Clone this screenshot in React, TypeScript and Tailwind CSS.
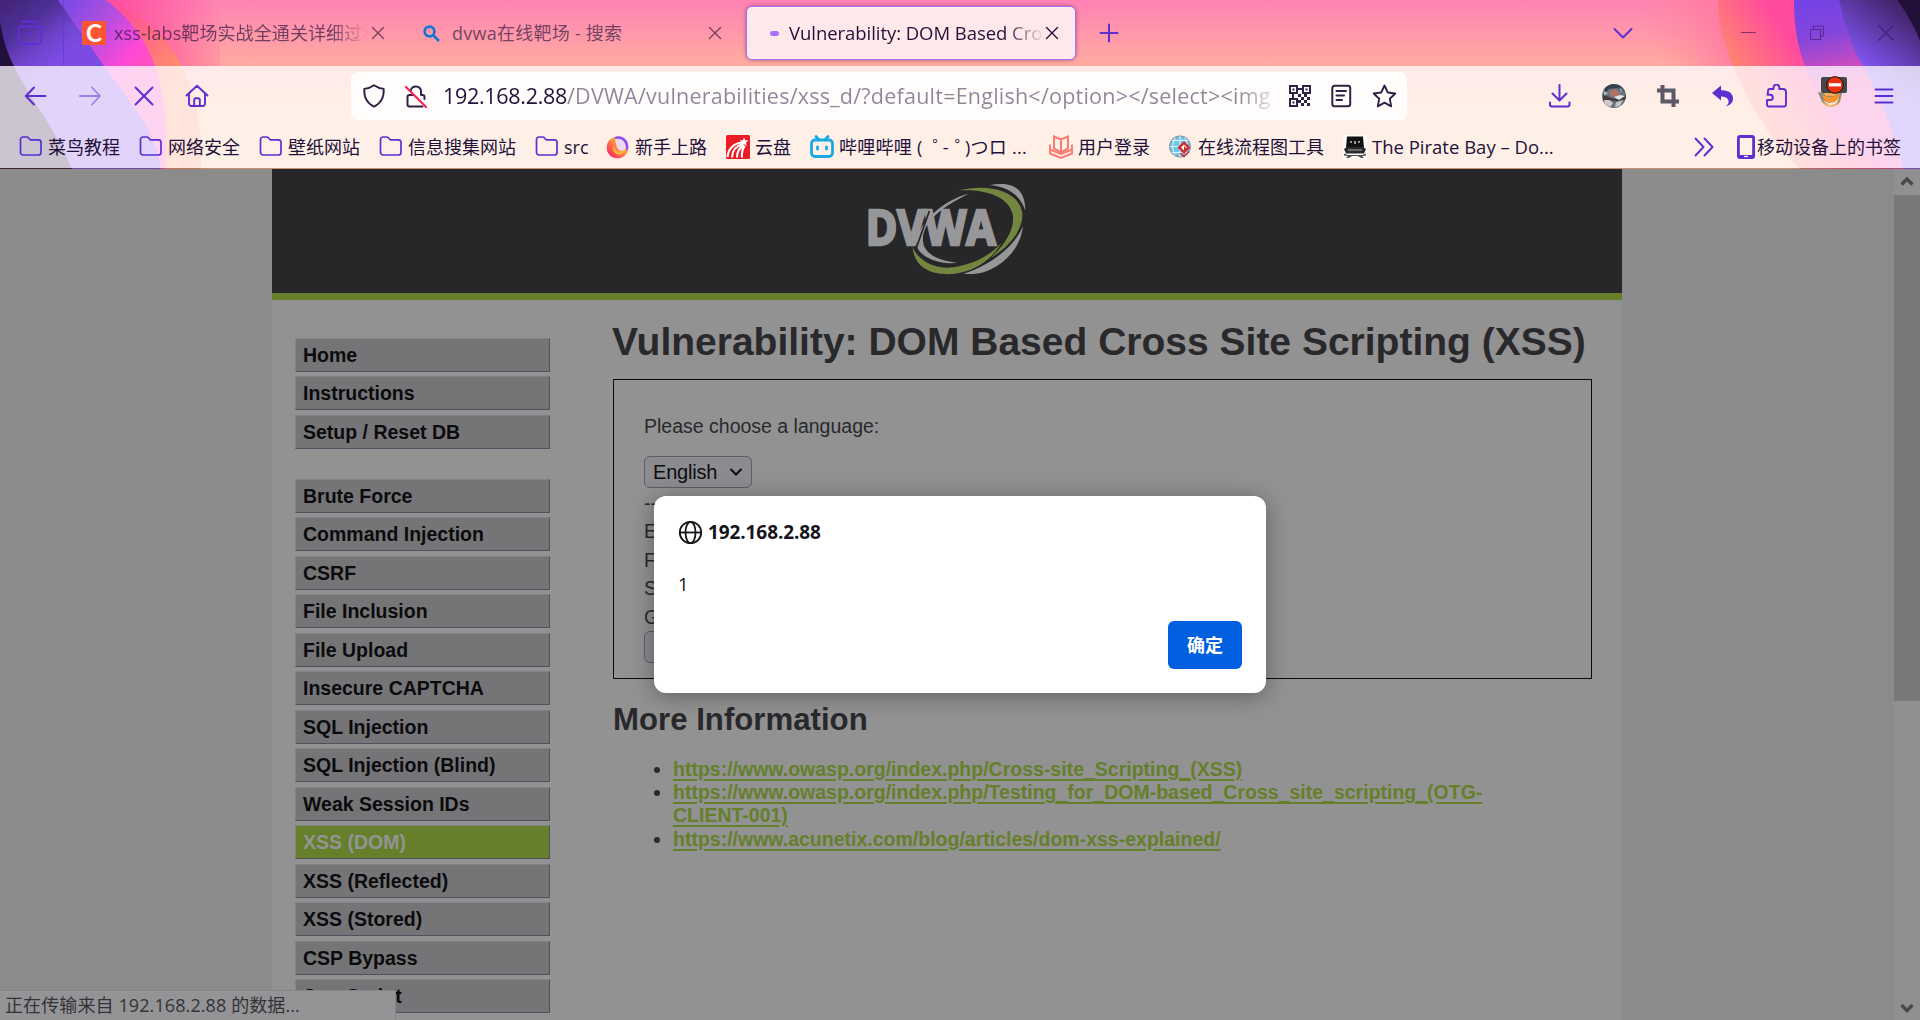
import React from "react";

const UI = "font-['Open_Sans','Noto_Sans_CJK_SC',sans-serif]";
const PURPLE = "#5b2fd0";

type IconProps = { className?: string; children: React.ReactNode; box?: number; color?: string; sw?: number };

function Icon({ className = "", children, box = 24, color = PURPLE, sw = 1.8 }: IconProps) {
  return (
    <svg
      className={`shrink-0 ${className}`}
      width={box}
      height={box}
      viewBox={`0 0 ${box} ${box}`}
      fill="none"
      stroke={color}
      strokeWidth={sw}
      strokeLinecap="round"
      strokeLinejoin="round"
    >
      {children}
    </svg>
  );
}

/* Curved gradient artwork behind the toolbars */
function ThemeArt() {
  return (
    <svg className="absolute inset-0" width="1920" height="169" viewBox="0 0 1920 169">
      <defs>
        <linearGradient id="base" x1="0" y1="0" x2="0" y2="1">
          <stop offset="0" stopColor="#ff82b4" />
          <stop offset="0.39" stopColor="#ffaca0" />
          <stop offset="0.7" stopColor="#ffc896" />
          <stop offset="1" stopColor="#ffc896" />
        </linearGradient>
        <linearGradient id="hot" gradientUnits="userSpaceOnUse" x1="120" y1="20" x2="215" y2="-10">
          <stop offset="0" stopColor="#ff4fa0" />
          <stop offset="1" stopColor="#ff4fa0" stopOpacity="0" />
        </linearGradient>
        <linearGradient id="ora" gradientUnits="userSpaceOnUse" x1="120" y1="10" x2="185" y2="70">
          <stop offset="0" stopColor="#ff4f9e" />
          <stop offset="0.5" stopColor="#ff6f80" />
          <stop offset="1" stopColor="#ff9468" />
        </linearGradient>
        <linearGradient id="mag" gradientUnits="userSpaceOnUse" x1="70" y1="0" x2="145" y2="60">
          <stop offset="0" stopColor="#7d4ae4" />
          <stop offset="0.4" stopColor="#b04ee0" />
          <stop offset="0.85" stopColor="#ff49d6" />
          <stop offset="1" stopColor="#ff4fc0" />
        </linearGradient>
        <linearGradient id="pur" gradientUnits="userSpaceOnUse" x1="0" y1="0" x2="50" y2="66">
          <stop offset="0" stopColor="#402474" />
          <stop offset="0.45" stopColor="#50309a" />
          <stop offset="0.75" stopColor="#7044cc" />
          <stop offset="1" stopColor="#7c4be4" />
        </linearGradient>
        <linearGradient id="rhot" gradientUnits="userSpaceOnUse" x1="1660" y1="60" x2="1725" y2="30">
          <stop offset="0" stopColor="#ff8a9a" stopOpacity="0" />
          <stop offset="1" stopColor="#ff7ca4" />
        </linearGradient>
        <linearGradient id="rora" gradientUnits="userSpaceOnUse" x1="1722" y1="50" x2="1775" y2="15">
          <stop offset="0" stopColor="#ff8470" />
          <stop offset="1" stopColor="#ff4a9e" />
        </linearGradient>
        <linearGradient id="rpur" gradientUnits="userSpaceOnUse" x1="1810" y1="0" x2="1830" y2="90">
          <stop offset="0" stopColor="#7542e6" />
          <stop offset="0.4" stopColor="#8446dc" />
          <stop offset="1" stopColor="#f04eb0" />
        </linearGradient>
        <linearGradient id="rdeep" gradientUnits="userSpaceOnUse" x1="1858" y1="64" x2="1900" y2="10">
          <stop offset="0" stopColor="#8256f6" />
          <stop offset="1" stopColor="#442670" />
        </linearGradient>
      </defs>
      <rect width="1920" height="169" fill="url(#base)" />
      <path d="M100 0H220V66H160Z" fill="url(#hot)" />
      <path d="M106 0C140 10 165 35 182 66C196 95 204 130 201 169H0V0Z" fill="url(#ora)" />
      <path d="M106 0C135 22 152 50 160 82C166 110 168 140 165 169H0V0Z" fill="url(#mag)" />
      <path d="M58 0L104 66C125 95 145 120 153 140C157 150 160 160 160 169H0V0Z" fill="url(#pur)" />
      <path d="M0 22C3 40 8 55 14 66C30 100 54 125 72 169H0Z" fill="#22103a" />
      <rect x="63" y="0" width="1" height="66" fill="#5b2fd0" opacity="0.5" />
      <path d="M1640 0H1760V66H1640Z" fill="url(#rhot)" />
      <path d="M1718 0C1718 25 1725 46 1733 66C1752 112 1775 145 1800 169H1920V0Z" fill="url(#rora)" />
      <path d="M1794 0C1794 25 1797 45 1805 66C1820 110 1850 145 1880 169H1920V0Z" fill="url(#rpur)" />
      <path d="M1839 0C1845 26 1852 48 1863 66C1885 105 1894 135 1903 169H1920V0Z" fill="url(#rdeep)" />
      <path d="M1897 0C1906 12 1914 25 1920 41V0Z" fill="#22103a" />
      <rect y="66" width="1920" height="102" fill="#fffdff" fillOpacity="0.77" />
      <rect y="168" width="1920" height="1" fill="#6a4030" fillOpacity="0.4" />
    </svg>
  );
}

function Cross({ color, className = "" }: { color: string; className?: string }) {
  return (
    <Icon box={14} color={color} sw={1.4} className={className}>
      <path d="M1.5 1.5l11 11M12.5 1.5l-11 11" />
    </Icon>
  );
}

function TabStrip() {
  return (
    <div className="flex h-[66px] items-center text-[18px] leading-[54px] whitespace-nowrap">
      <Icon box={26} className="ml-[17px]" sw={1.8} color="#5e30d6">
        <path d="M5 1.5h16M2 9v12.5a2.5 2.5 0 0 0 2.500 2.500h17a2.500 2.500 0 0 0 2.500-2.500V9a2.500 2.500 0 0 0-2.500-2.500h-17A2.500 2.500 0 0 0 2 9ZM10.500 13.500h5" />
      </Icon>
      <div className="ml-[39px] flex h-6 w-6 shrink-0 items-center justify-center bg-[#fc5531] font-['Lato'] text-[24px] leading-6 font-bold text-white">
        C
      </div>
      <div className="ml-[8px] w-[255px] overflow-hidden tracking-[0.1px] text-[#22103a]/65 [mask-image:linear-gradient(to_right,black_218px,transparent_254px)]">
        xss-labs靶场实战全通关详细过程
      </div>
      <Cross color="#7a3d63" className="ml-[2px]" />
      <svg className="ml-[38px] shrink-0" width="17" height="17" viewBox="0 0 17 17" fill="none" stroke="#1277d3" strokeWidth="2.600">
        <circle cx="6.500" cy="6.500" r="4.900" />
        <path d="M10 10l6 6" />
      </svg>
      <div className="ml-[12px] w-[256px] tracking-[0.25px] text-[#22103a]/65">dvwa在线靶场 - 搜索</div>
      <Cross color="#7a3d63" />
      <div className="ml-[24px] flex h-[54px] w-[330px] shrink-0 items-center rounded-[6px] border border-[#a56cf5] bg-[#ffe8ea] shadow-[0_0_4px_rgba(60,10,60,0.45)] outline-1 -outline-offset-2 outline-white/40">
        <div className="ml-[23px] h-[5px] w-[9px] rounded-full bg-[#ac70ff]" />
        <div className="ml-[10px] w-[254px] overflow-hidden text-[18.500px] tracking-[-0.05px] text-[#22103a] [mask-image:linear-gradient(to_right,black_215px,transparent_256px)]">
          Vulnerability: DOM Based Cross
        </div>
        <Cross color="#22103a" className="ml-[2px]" />
      </div>
      <Icon box={20} className="ml-[23px]" sw={2}>
        <path d="M10 1.500v17M1.500 10h17" />
      </Icon>
      <Icon box={20} className="ml-[494px]" sw={2}>
        <path d="M1.500 6l8.500 8.500L18.500 6" />
      </Icon>
      <svg className="ml-[108px] shrink-0" width="16" height="16" fill="none" stroke="#8a2f68" strokeWidth="1">
        <path d="M0 7.500h15" />
      </svg>
      <svg className="ml-[53px] shrink-0" width="16" height="16" fill="none" stroke="#5a2a9c" strokeWidth="1.200">
        <path d="M.500 4.500h10v10h-10zM3.500 4V1h10v10h-3" />
      </svg>
      <svg className="ml-[52px] shrink-0" width="16" height="16" fill="none" stroke="#3f2378" strokeWidth="1.100">
        <path d="M.500.500l15 15M15.500.500l-15 15" />
      </svg>
    </div>
  );
}

function NavBar() {
  return (
    <div className="flex h-[60px] items-center">
      <Icon className="ml-[23px]" sw={2}>
        <path d="M22.500 12H3M11 3.500L2.800 12l8.200 8.500" />
      </Icon>
      <Icon className="ml-[31px] opacity-50" sw={1.800}>
        <path d="M2 12h20M14 3.500l8 8.500-8 8.500" />
      </Icon>
      <Icon className="ml-[30px]" sw={2}>
        <path d="M3.500 3.500l17 17M20.500 3.500l-17 17" />
      </Icon>
      <Icon className="ml-[29px]" sw={1.900}>
        <path d="M1.500 11.500L12 1.800l10.500 9.700M4 9.500v10.300A2.300 2.300 0 0 0 6.300 22h11.400a2.300 2.300 0 0 0 2.300-2.200V9.500M9.200 22v-6.200a1.500 1.500 0 0 1 1.500-1.500h2.600a1.500 1.500 0 0 1 1.500 1.500V22" />
      </Icon>
      <div className="ml-[142px] flex h-12 w-[1056px] shrink-0 items-center rounded-[7px] bg-[#fffdfb]">
        <Icon className="ml-[11px]" color="#2f2246" sw={1.900}>
          <path d="M12 1.300c3 2.200 6 3.200 9.700 3.600.4 7.600-1.700 14-9.700 17.800C4 18.900 1.900 12.500 2.300 4.900 6 4.500 9 3.500 12 1.300z" />
        </Icon>
        <Icon className="ml-[18px]" color="#2f2246" sw={2}>
          <path d="M6.800 6.500A5.200 5.200 0 0 1 17 7v4h1.500a2 2 0 0 1 2 2v2M10 11H5.500a2 2 0 0 0-2 2v7.500a2 2 0 0 0 2 2h13" />
          <path d="M2 3l20 20" stroke="#fb1e55" strokeWidth="2.200" />
        </Icon>
        <div className="ml-[15px] w-[833px] overflow-hidden text-[21.5px] leading-[44px] whitespace-nowrap text-[#22103a]/50 [mask-image:linear-gradient(to_right,black_795px,transparent_840px)]">
          <span className="tracking-[-0.3px] text-[#22103a]">192.168.2.88</span>
          <span className="tracking-[0.23px]">{"/DVWA/vulnerabilities/xss_d/?default=English</option></select><img"}</span>
        </div>
        <svg className="ml-[13px] shrink-0" width="22" height="22" viewBox="0 0 22 22" fill="#2f2246">
          <path fillRule="evenodd" d="M0 0h9v9H0zM2 2v5h5V2zM13 0h9v9h-9zM15 2v5h5V2zM0 13h9v9H0zM2 15v5h5v-5z" />
          <path d="M3.500 3.500h2v2h-2zM16.500 3.500h2v2h-2zM3.500 16.500h2v2h-2zM9 3h4v2H9zM3 9h2v4H3zM9 9h3v3H9zM12 12h3v3h-3zM15 9h3v3h-3zM18 12h3v3h-3zM9 15h3v3H9zM15 15h3v3h-3zM12 18h3v3h-3zM18 18h3v3h-3z" />
        </svg>
        <Icon className="ml-[19px]" color="#2f2246" sw={2}>
          <path d="M4.500 1.800h13.500a2.200 2.200 0 0 1 2.200 2.200v16a2.200 2.200 0 0 1-2.200 2.200H4.500A2.200 2.200 0 0 1 2.300 20V4a2.200 2.200 0 0 1 2.200-2.200ZM6.500 7h9.500M6.500 11.500h7.500M6.500 16h5.500" />
        </Icon>
        <Icon className="ml-[18px]" box={25} color="#2f2246" sw={1.900}>
          <path d="M12.500 1.500l3.300 7 7.500 1-5.500 5.300 1.400 7.600-6.700-3.700-6.700 3.700 1.400-7.600L1.700 9.500l7.500-1z" />
        </Icon>
      </div>
      <Icon className="ml-[141px]" sw={2}>
        <path d="M11.500 1v15M4.500 9.500l7 7 7-7M2 18.500v2a2 2 0 0 0 2 2h15.500a2 2 0 0 0 2-2v-2" />
      </Icon>
      <svg className="ml-[30px] shrink-0" width="24" height="24" viewBox="0 0 24 24">
        <clipPath id="face">
          <circle cx="12" cy="12" r="12" />
        </clipPath>
        <g clipPath="url(#face)">
          <rect width="24" height="24" fill="#66757c" />
          <path d="M3 0h15l5 8-8-4-8 1-5 5z" fill="#31424e" />
          <path d="M7 7l6-2 5 4-2 5-7-2z" fill="#b07464" />
          <path d="M1 10l8 4 6 1 9-4v4l-8 3-8-2-7 1z" fill="#4a3a3e" />
          <path d="M12 13l6-2 5 1-6 4z" fill="#dde4e2" />
          <path d="M2 16l5 0 4 3-3 4-5-3z" fill="#d7c9c8" />
          <path d="M14 18l7-2-3 6-5 1z" fill="#b9c6ca" />
          <path d="M2 7l4 2-4 3z" fill="#a6b8bd" />
          <path d="M17 3l4 3-2 3z" fill="#8798a0" />
        </g>
      </svg>
      <svg className="ml-[31px] shrink-0" width="22" height="22" fill="none" stroke="#5b5966" strokeWidth="4">
        <path d="M5.500 0v16.500H22M0 5.500h16.500V22" />
      </svg>
      <svg className="ml-[33px] shrink-0" width="22" height="22" viewBox="0 0 22 22" fill={PURPLE}>
        <path d="M0 8L9 .500v4.800C17 5 21.500 9 21 14.500c-.4 3.700-3.500 6.200-7.500 6.800 2.500-1.500 3.600-3.500 3-5.600C15.800 12.800 13 11.500 9 11.500V15.500z" />
      </svg>
      <Icon className="ml-[31px]" sw={1.900}>
        <path d="M3 8.500V7a2 2 0 0 1 2-2h3.500V3.500a2.900 2.900 0 0 1 5.800 0V5H18a3 3 0 0 1 3 3v12.500a2 2 0 0 1-2 2H4a2 2 0 0 1-2-2V16h3.200a2.600 2.600 0 0 0 0-5.200H2.500z" />
      </Icon>
      <svg className="ml-[29px] mb-[8px] shrink-0" width="30" height="32" viewBox="0 0 30 32">
        <circle cx="13" cy="20.500" r="10.500" fill="#f0ad52" />
        <path d="M0 16l5 1 3 3h9l5-4 2 1-3 10-9 2-8-3z" fill="#8c8a80" />
        <path d="M4 19l6 2 8-1 4-3-2 8-7 2-6-2z" fill="#fb922c" />
        <path d="M4 24l7 3 6-1 4-4-2 5-7 3z" fill="#f4e6cc" />
        <rect x="3" y="1" width="26" height="16" rx="2" fill="#46464a" />
        <circle cx="17" cy="9" r="8.300" fill="#e9330f" stroke="#111" strokeWidth="1" />
        <rect x="11" y="7.200" width="12" height="3.200" fill="white" />
      </svg>
      <Icon className="ml-[24px]" sw={1.900}>
        <path d="M3.500 5.500h17M3.500 12h17M3.500 18.500h17" />
      </Icon>
    </div>
  );
}

function Folder() {
  return (
    <Icon box={24} sw={1.700}>
      <path d="M1.500 4.500a2.500 2.500 0 0 1 2.500-2.500h3.700c.7 0 1.300.3 1.700.8l1.800 2h8.300a2.500 2.500 0 0 1 2.500 2.500v10.200a2.500 2.500 0 0 1-2.500 2.500H4a2.500 2.500 0 0 1-2.500-2.500z" />
    </Icon>
  );
}

function BookIcon({ kind }: { kind: string }) {
  switch (kind) {
    case "fox":
      return (
        <svg className="shrink-0" width="24" height="24" viewBox="0 0 24 24">
          <defs>
            <linearGradient id="fx" x1="1" y1="0.100" x2="0.200" y2="0.900">
              <stop offset="0" stopColor="#ffe14a" />
              <stop offset="0.450" stopColor="#ff9a3a" />
              <stop offset="1" stopColor="#ff2f63" />
            </linearGradient>
          </defs>
          <circle cx="11.500" cy="12.500" r="10.800" fill="url(#fx)" />
          <path d="M8 2.500C14-1 22 3 22.300 11c.3 3-1 5-2 5.500C21 10 17 5 12 5z" fill="#8b4cf0" />
          <path d="M9 4.500C15 2 21 7 19.500 14c-3 4-9 1-9-3.500z" fill="#e9d8f0" />
          <path d="M8 9c-1 6 5 10 12 5.500C18 21 7 22 7 13z" fill="#ffb03c" />
        </svg>
      );
    case "cloud":
      return (
        <svg className="shrink-0" width="24" height="24" viewBox="0 0 24 24">
          <rect width="24" height="24" rx="1.500" fill="#ed1c24" />
          <path d="M1.500 22C2 14 8 8 16 7.500M6 22.500C6 16 10 11 17 9M11 22.500C11 17 13 13 18 10.500M16 22.500c-.5-5 .5-9 3-11.500" stroke="white" strokeWidth="2.100" fill="none" />
          <path d="M18 2.500l1.300 2.800 3 .2-2.300 2.200.7 3.100-2.700-1.500-2.700 1.500.5-3.300-2-2 3-.3z" fill="white" />
        </svg>
      );
    case "bili":
      return (
        <svg className="shrink-0" width="24" height="24" viewBox="0 0 24 24" fill="none" stroke="#1ba7e2" strokeWidth="2.800" strokeLinecap="round">
          <rect x="1.500" y="5" width="21" height="16.500" rx="3.500" />
          <path d="M6 1.500L9 5M18 1.500L15 5M7.500 12v2M16.500 12v2" />
        </svg>
      );
    case "book":
      return (
        <svg className="shrink-0" width="24" height="24" viewBox="0 0 24 24" fill="none" stroke="#fb7b72" strokeWidth="2">
          <path d="M5 1.500l7 3 7-3v12l-4 2-3 2-3-2-4-2zM12 4.500v12" />
          <path d="M1 9.500v9l11 4.500 11-4.500v-9M1 14.500l11 4.500 11-4.500" strokeWidth="1.900" />
        </svg>
      );
    case "globe":
      return (
        <svg className="shrink-0" width="24" height="24" viewBox="0 0 24 24">
          <circle cx="11" cy="11.500" r="10.300" fill="#6fc4ec" stroke="#839aa6" strokeWidth="1.200" />
          <path d="M11 1v21M1 11.500h20M3 5.500h16M3 17.500h16M6 2.500c-3 6-3 12 0 18M16 2.500c3 6 3 12 0 18" stroke="#e4f6ff" strokeWidth="1" fill="none" />
          <path d="M15 6l6.500 6.500L15 19l-6.500-6.500z" fill="#cf2e2e" />
          <path d="M15 9.500l3 3-3 3-3-3z" fill="#fff" />
          <path d="M15 11l3 3-3 3z" fill="#cf2e2e" />
          <path d="M11 18l4 3.500 5-5" stroke="#cf2e2e" strokeWidth="1.400" fill="none" />
        </svg>
      );
    case "ship":
      return (
        <svg className="shrink-0" width="24" height="24" viewBox="0 0 24 24">
          <rect width="24" height="24" fill="#fffdfb" />
          <path d="M4 1.500h16l1 11.500H3z" fill="#111" />
          <path d="M7 6h2v2H7zM11 6h2v3h-2zM15 6h2v2h-2z" fill="#999" />
          <path d="M1 14l3-2h16l3 2-2 4.500H3z" fill="#2a2a2a" />
          <path d="M5 14.500h14v1H5z" fill="#aaa" />
          <path d="M1 18.500l4 1.500h14l4-1.500v2l-4 .5 2 2h-3l-3-2H9l-3 2H3l2-2-4-.5z" fill="#4c4c4c" />
        </svg>
      );
    default:
      return <Folder />;
  }
}

const bookmarks: { kind: string; label: React.ReactNode; w: string; ls?: string }[] = [
  { kind: "folder", label: "菜鸟教程", w: "w-[120px]" },
  { kind: "folder", label: "网络安全", w: "w-[120px]" },
  { kind: "folder", label: "壁纸网站", w: "w-[120px]" },
  { kind: "folder", label: "信息搜集网站", w: "w-[156px]" },
  { kind: "folder", label: "src", w: "w-[71px]" },
  { kind: "fox", label: "新手上路", w: "w-[120px]" },
  { kind: "cloud", label: "云盘", w: "w-[84px]" },
  {
    kind: "bili",
    label: (
      <>
        哔哩哔哩 (<span className="relative left-[10px]">゜</span>
        <span className="relative left-[2px]">-</span>
        <span className="relative left-[8px]">゜</span>)つロ ...
      </>
    ),
    w: "w-[239px]",
    ls: "tracking-[0.25px]",
  },
  { kind: "book", label: "用户登录", w: "w-[120px]" },
  { kind: "globe", label: "在线流程图工具", w: "w-[174px]" },
  { kind: "ship", label: "The Pirate Bay – Do...", w: "w-[351px]", ls: "text-[18.500px] tracking-[0px]" },
];

function BookmarksBar() {
  return (
    <div className="flex h-[42px] items-center text-[18px] whitespace-nowrap text-[#22103a]">
      <div className="flex items-center pl-[19px]">
        {bookmarks.map((b, i) => (
          <div key={i} className={`flex shrink-0 items-center gap-[5px] ${b.w}`}>
            <BookIcon kind={b.kind} />
            <span className={b.ls ?? ""}>{b.label}</span>
          </div>
        ))}
      </div>
      <Icon box={20} sw={1.900}>
        <path d="M1.500 1.500L9.500 10l-8 8.500M10.500 1.500l8 8.500-8 8.500" />
      </Icon>
      <svg className="ml-[23px] shrink-0" width="18" height="24" viewBox="0 0 18 24">
        <path fillRule="evenodd" d="M3 0h12a3 3 0 0 1 3 3v18a3 3 0 0 1-3 3H3a3 3 0 0 1-3-3V3a3 3 0 0 1 3-3ZM2.800 3v17h12.400V3z" fill={PURPLE} />
        <path d="M7 21.500h4" stroke="#fff" strokeWidth="1.200" />
      </svg>
      <span className="ml-[2px]">移动设备上的书签</span>
    </div>
  );
}

function Logo() {
  return (
    <svg width="158" height="92" viewBox="146 54 474 276">
      <path d="M448 86C380 120 300 170 312 235C318 268 360 288 415 293C350 302 292 268 292 238C288 180 370 105 448 86Z" fill="#97979a" />
      <text
        x="139"
        y="241"
        textLength="390"
        lengthAdjust="spacingAndGlyphs"
        fontFamily="Open Sans"
        fontWeight="700"
        fontSize="144"
        fill="#97979a"
        stroke="#97979a"
        strokeWidth="8"
      >
        DVWA
      </text>
      <path d="M330 138L292 246" stroke="#272729" strokeWidth="5" />
      <path d="M420 76C510 55 600 78 609 145C612 195 570 245 515 278C560 235 588 190 580 148C568 95 500 72 420 76Z" fill="#73863f" />
      <path d="M280 246C286 318 350 330 400 327C470 320 520 280 547 233C505 280 440 306 385 308C335 308 295 282 280 246Z" fill="#73863f" />
      <path d="M512 60C575 50 618 65 618 137C605 100 580 68 512 60Z" fill="#97979a" />
      <path d="M611 183C603 265 525 325 460 327H432C520 298 588 240 611 183Z" fill="#97979a" />
    </svg>
  );
}

const menuTop = ["Home", "Instructions", "Setup / Reset DB"];
const menuMain = [
  "Brute Force",
  "Command Injection",
  "CSRF",
  "File Inclusion",
  "File Upload",
  "Insecure CAPTCHA",
  "SQL Injection",
  "SQL Injection (Blind)",
  "Weak Session IDs",
  "XSS (DOM)",
  "XSS (Reflected)",
  "XSS (Stored)",
  "CSP Bypass",
  "JavaScript",
];

function MenuItem({ label }: { label: string }) {
  const active = label === "XSS (DOM)";
  return (
    <li
      className={`mb-[4.5px] h-[34px] border border-t-[#838385] border-r-[#50505f] border-b-[#50505f] border-l-[#838385] pl-[7px] text-[19.5px] leading-[33px] font-bold ${
        active ? "bg-[#657f2a] text-[#949495]" : "bg-[#757577] text-[#0b0b0d]"
      }`}
    >
      {label}
    </li>
  );
}

function SelectBox({ label }: { label: string }) {
  return (
    <div className="flex h-8 w-[108px] items-center rounded-[6px] border border-[#5d5d68] bg-[#8b8b90] pl-2 text-[20px] text-[#0d0d10]">
      <span className="w-[76px] tracking-[-0.2px]">{label}</span>
      <svg width="14" height="10" fill="none" stroke="#0d0d10" strokeWidth="2" strokeLinecap="round">
        <path d="M2 2.500l5 5 5-5" />
      </svg>
    </div>
  );
}

const linkClass = "font-bold text-[#657f2a] underline decoration-2 underline-offset-[3px]";

function Page() {
  return (
    <div className="flex h-[851px] overflow-hidden bg-[#8b8b8c] font-['Liberation_Sans',sans-serif]">
      <div className="ml-[272px] flex h-full w-[1350px] shrink-0 flex-col bg-[#929293]">
        <div className="flex h-[131px] shrink-0 justify-center border-b-[7px] border-[#667f2a] bg-[#272729] pt-[14px]">
          <Logo />
        </div>
        <div className="flex">
          <div className="ml-[23px] w-[255px] pt-[37.6px]">
            <ul className="mb-[30px]">
              {menuTop.map((m) => (
                <MenuItem key={m} label={m} />
              ))}
            </ul>
            <ul>
              {menuMain.map((m) => (
                <MenuItem key={m} label={m} />
              ))}
            </ul>
          </div>
          <div className="ml-[63px] w-[979px] pt-[19px] text-[19.5px] text-[#29292c]">
            <h1 className="-ml-px h-[60px] text-[39px] leading-[46px] font-bold whitespace-nowrap">
              Vulnerability: DOM Based Cross Site Scripting (XSS)
            </h1>
            <div className="h-[300px] border border-[#0c0c0e] pt-[32px] pl-[30px]">
              <p className="leading-[29px]">Please choose a language:</p>
              <div className="mt-[15px]">
                <SelectBox label="English" />
              </div>
              <div className="mt-[1px] leading-[28.400px]">
                <p>----</p>
                <p>English</p>
                <p>French</p>
                <p>Spanish</p>
                <p>German</p>
              </div>
              <SelectBox label="Select" />
            </div>
            <h2 className="mt-[21px] text-[31.2px] leading-[40px] font-bold">More Information</h2>
            <ul className="mt-[17.500px] list-disc pl-[60px] leading-[23.400px]">
              <li>
                <a className={linkClass}>https://www.owasp.org/index.php/Cross-site_Scripting_(XSS)</a>
              </li>
              <li>
                <a className={linkClass}>
                  https://www.owasp.org/index.php/Testing_for_DOM-based_Cross_site_scripting_(OTG-
                  <br />
                  CLIENT-001)
                </a>
              </li>
              <li>
                <a className={linkClass}>https://www.acunetix.com/blog/articles/dom-xss-explained/</a>
              </li>
            </ul>
          </div>
        </div>
      </div>
      <div className="ml-auto flex w-[26px] flex-col items-center bg-[#909092]">
        <svg className="h-[26px] shrink-0" width="14" height="26" fill="none" stroke="#49494b" strokeWidth="3.400">
          <path d="M1.500 15.500l5.500-5.500 5.500 5.500" />
        </svg>
        <div className="h-[506px] w-full bg-[#78787a]" />
        <svg className="mt-auto mb-[1px] shrink-0" width="14" height="20" fill="none" stroke="#49494b" strokeWidth="3.400">
          <path d="M1.500 6l5.500 5.500L12.500 6" />
        </svg>
      </div>
    </div>
  );
}

function AlertDialog() {
  return (
    <div className={`absolute top-[496px] left-[654px] flex h-[197px] w-[612px] flex-col rounded-[12px] bg-white text-[#15141a] shadow-[0_3px_22px_rgba(20,20,28,0.4)] ${UI}`}>
      <div className="mt-[21px] ml-[24px] flex h-[30px] items-center gap-[5px]">
        <svg width="25" height="25" viewBox="0 0 25 25" fill="none" stroke="#15141a" strokeWidth="1.800">
          <circle cx="12.500" cy="12.500" r="10.700" />
          <ellipse cx="12.500" cy="12.500" rx="5" ry="10.700" />
          <path d="M2 12.500h21" />
        </svg>
        <span className="text-[19px] font-bold tracking-[-0.1px]">192.168.2.88</span>
      </div>
      <div className="mt-[22px] ml-[24px] h-[30px] text-[18.500px] leading-[30px]">1</div>
      <div className="mt-[22px] mr-[24px] flex h-12 w-[74px] items-center justify-center self-end rounded-[6px] bg-[#0060df] text-[18px] font-bold text-white">
        确定
      </div>
    </div>
  );
}

export default function App() {
  return (
    <div className={`relative h-[1020px] w-[1920px] overflow-hidden ${UI}`}>
      <div className="relative h-[169px]">
        <ThemeArt />
        <div className="relative">
          <TabStrip />
          <NavBar />
          <BookmarksBar />
        </div>
      </div>
      <Page />
      <div className="absolute bottom-0 left-0 h-[30px] w-[396px] rounded-tr-[2px] border-t border-r border-[#868688] bg-[#949496] pl-[5px] text-[18px] leading-[28px] tracking-[0.1px] whitespace-nowrap text-[#333336]">
        正在传输来自 192.168.2.88 的数据...
      </div>
      <AlertDialog />
    </div>
  );
}
